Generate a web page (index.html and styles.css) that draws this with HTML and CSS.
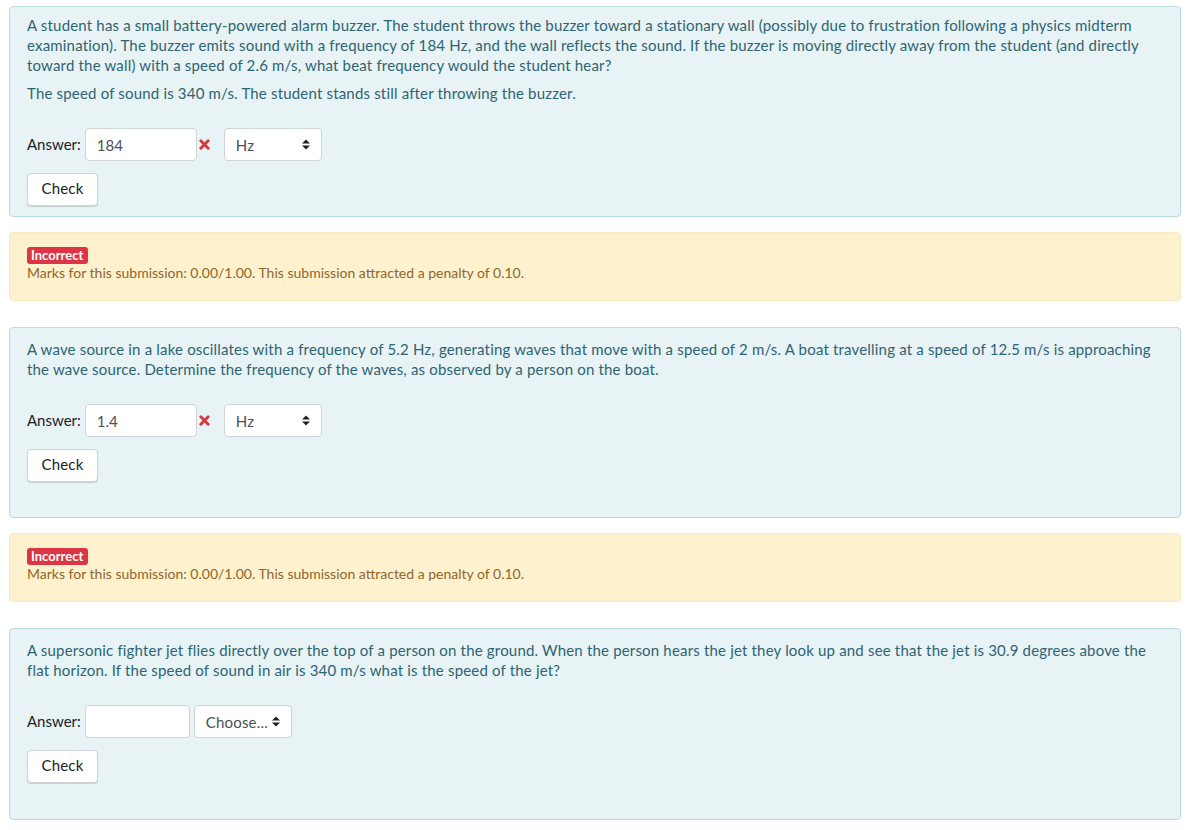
FILE: index.html
```html
<!DOCTYPE html>
<html lang="en">
<head>
    <meta charset="UTF-8">
    <title>Quiz</title>
    <link rel="stylesheet" href="styles.css">
</head>
<body>
    <div class="page">
        <div class="formulation first">
            <div class="qtext">
                <p>A student has a small battery-powered alarm buzzer. The student throws the buzzer toward a stationary wall (possibly due to frustration following a physics midterm examination). The buzzer emits sound with a frequency of 184 Hz, and the wall reflects the sound. If the buzzer is moving directly away from the student (and directly toward the wall) with a speed of 2.6 m/s, what beat frequency would the student hear?</p>
                <p>The speed of sound is 340 m/s. The student stands still after throwing the buzzer.</p>
            </div>
            <div class="answer-row">
                <label class="answer-label">Answer:</label>
                <input class="answer-input" type="text" value="184">
                <svg class="wrong-icon" width="12" height="12" viewBox="0 0 12 12"><path d="M2 2L10 10M10 2L2 10" stroke="#d9383a" stroke-width="3.2" stroke-linecap="round"/></svg>
                <div class="unit-select">
                    <span>Hz</span>
                    <svg width="8" height="11" viewBox="0 0 8 11"><path d="M0 4.5L4 0.5L8 4.5Z M0 6.5L4 10.5L8 6.5Z" fill="#1d2125"/></svg>
                </div>
            </div>
            <button class="check-button">Check</button>
        </div>

        <div class="outcome">
            <div class="badge-line"><span class="badge">Incorrect</span></div>
            <div class="marks">Marks for this submission: 0.00/1.00. This submission attracted a penalty of 0.10.</div>
        </div>

        <div class="formulation">
            <div class="qtext">
                <p>A wave source in a lake oscillates with a frequency of 5.2 Hz, generating waves that move with a speed of 2 m/s. A boat travelling at a speed of 12.5 m/s is approaching the wave source. Determine the frequency of the waves, as observed by a person on the boat.</p>
            </div>
            <div class="answer-row">
                <label class="answer-label">Answer:</label>
                <input class="answer-input" type="text" value="1.4">
                <svg class="wrong-icon" width="12" height="12" viewBox="0 0 12 12"><path d="M2 2L10 10M10 2L2 10" stroke="#d9383a" stroke-width="3.2" stroke-linecap="round"/></svg>
                <div class="unit-select">
                    <span>Hz</span>
                    <svg width="8" height="11" viewBox="0 0 8 11"><path d="M0 4.5L4 0.5L8 4.5Z M0 6.5L4 10.5L8 6.5Z" fill="#1d2125"/></svg>
                </div>
            </div>
            <button class="check-button">Check</button>
            <div class="validation"></div>
        </div>

        <div class="outcome">
            <div class="badge-line"><span class="badge">Incorrect</span></div>
            <div class="marks">Marks for this submission: 0.00/1.00. This submission attracted a penalty of 0.10.</div>
        </div>

        <div class="formulation">
            <div class="qtext">
                <p>A supersonic fighter jet flies directly over the top of a person on the ground. When the person hears the jet they look up and see that the jet is 30.9 degrees above the flat horizon. If the speed of sound in air is 340 m/s what is the speed of the jet?</p>
            </div>
            <div class="answer-row">
                <label class="answer-label">Answer:</label>
                <input class="answer-input empty" type="text" value="">
                <div class="unit-select choose">
                    <span>Choose...</span>
                    <svg width="8" height="11" viewBox="0 0 8 11"><path d="M0 4.5L4 0.5L8 4.5Z M0 6.5L4 10.5L8 6.5Z" fill="#1d2125"/></svg>
                </div>
            </div>
            <button class="check-button">Check</button>
            <div class="validation last"></div>
        </div>
    </div>
</body>
</html>
```

FILE: styles.css
```css
body {
    margin: 0;
    font-family: Lato, "Liberation Sans", sans-serif;
    font-size: 15px;
    line-height: 20px;
    letter-spacing: 0.18px;
    background: #ffffff;
}
.page {
    padding: 6px 11px 0 9px;
}
.formulation {
    background-color: #e7f3f5;
    color: #2f6473;
    border: 1px solid #b8dce2;
    border-radius: 4px;
    padding: 11px 17px 10px;
    margin-bottom: 15px;
}
.formulation.first {
    padding-top: 8px;
}
.qtext {
    margin-bottom: 25px;
}
.qtext p {
    margin: 0 0 8px;
}
.answer-row {
    display: flex;
    align-items: center;
    height: 33px;
    margin-bottom: 12px;
}
.answer-label {
    color: #1d2125;
    margin-right: 4px;
    letter-spacing: 0;
    position: relative;
    top: -1px;
}
.answer-input {
    width: 112px;
    height: 33px;
    box-sizing: border-box;
    border: 1px solid #ced4da;
    border-radius: 4px;
    padding: 0 11px;
    font-family: inherit;
    font-size: 15px;
    color: #495057;
    background: #fff;
}
.answer-input.empty {
    width: 105px;
}
.wrong-icon {
    width: 11px;
    height: 11px;
    margin: 0 14px 0 2px;
}
.unit-select {
    width: 98px;
    height: 33px;
    box-sizing: border-box;
    border: 1px solid #ced4da;
    border-radius: 4px;
    background: #fff;
    display: flex;
    align-items: center;
    justify-content: space-between;
    padding: 0 11px 0 11px;
    color: #495057;
}
.unit-select.choose {
    margin-left: 4px;
}
.check-button {
    display: block;
    width: 71px;
    height: 33px;
    background: #fff;
    border: 1px solid #ced4da;
    border-radius: 4px;
    box-shadow: 0 1px 1px rgba(0, 0, 0, 0.15);
    font-family: inherit;
    font-size: 15px;
    letter-spacing: 0.18px;
    color: #1d2125;
    padding: 0 0 3px;
}
.validation {
    height: 25px;
}
.validation.last {
    height: 26px;
}
.outcome {
    background-color: #fef1cd;
    color: #8e662e;
    border: 1px solid #fbe8c0;
    border-radius: 4px;
    padding: 13px 17px 17px;
    margin-bottom: 26px;
    font-size: 14px;
    letter-spacing: 0;
}
.badge-line {
    line-height: 17px;
    height: 17px;
}
.badge {
    display: inline-block;
    background: #dc3545;
    color: #fff;
    font-weight: bold;
    font-size: 13px;
    line-height: 17px;
    padding: 0 5px 0 4px;
    border-radius: 3px;
}
.marks {
    line-height: 20px;
}
```
